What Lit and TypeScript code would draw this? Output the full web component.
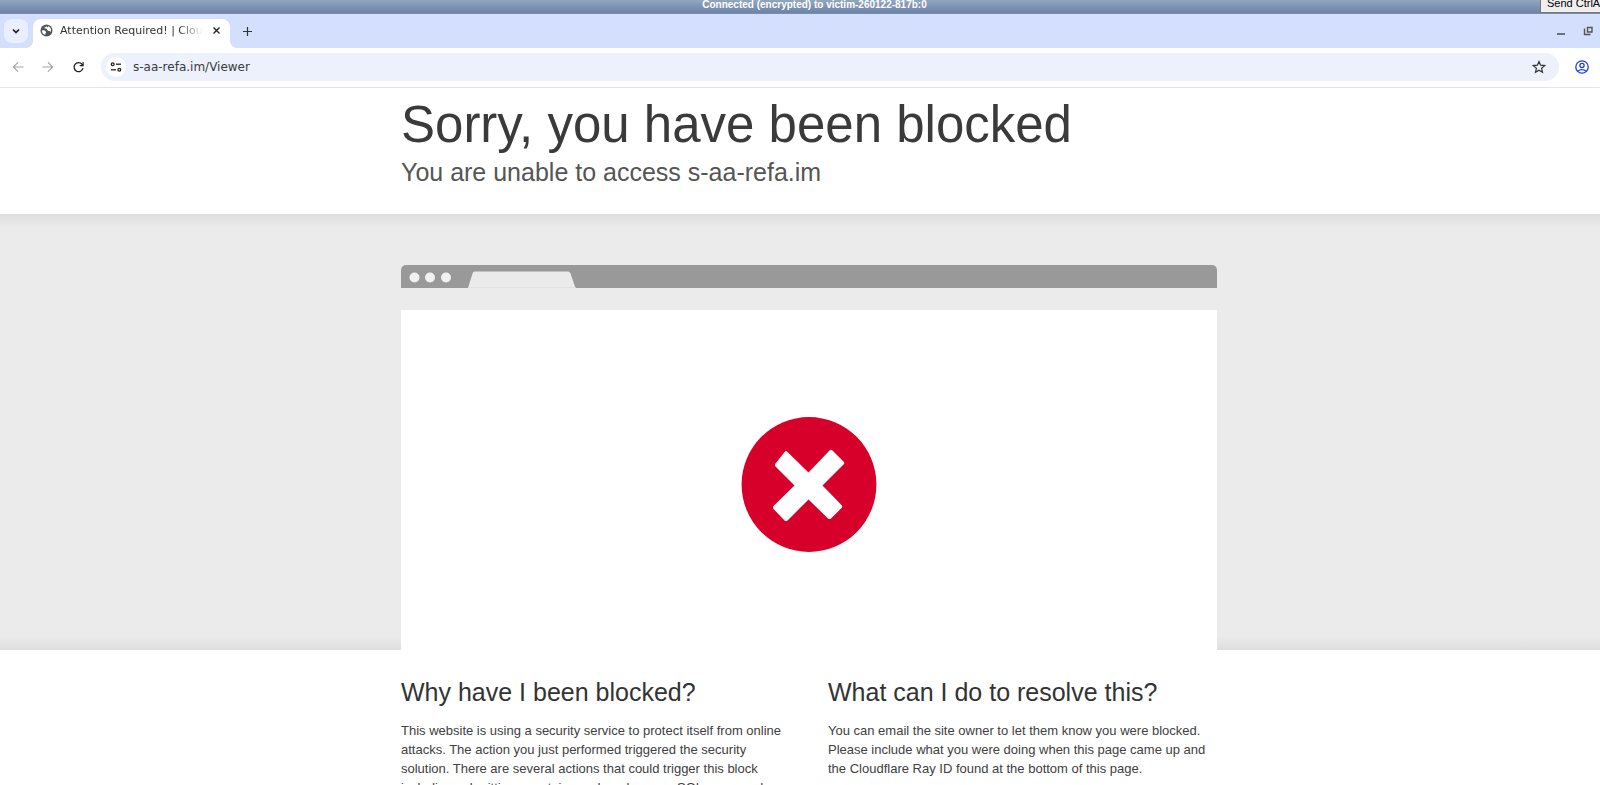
import { LitElement, html, css, svg } from "lit";
import { customElement, state } from "lit/decorators.js";

const icon = (w: number, h: number, body: unknown) =>
  html`<svg width=${w} height=${h} viewBox="0 0 ${w} ${h}" aria-hidden="true">${body}</svg>`;

@customElement("remote-bar")
class RemoteBar extends LitElement {
  static styles = css`
    :host {
      display: block;
      position: relative;
      height: 14px;
      overflow: hidden;
      background: linear-gradient(#92a6be, #6c82a9 92%, #8795b4);
      font-family: "Liberation Sans", Arial, sans-serif;
    }
    .status {
      height: 9px;
      line-height: 9px;
      padding-left: 29px;
      text-align: center;
      font-size: 10px;
      font-weight: bold;
      color: #fff;
      white-space: nowrap;
    }
    .send {
      position: absolute;
      top: -6px;
      left: calc(100% - 60px);
      width: 104px;
      height: 19px;
      padding: 0 0 0 6px;
      border: 1px solid #777;
      background: #efefef;
      color: #000;
      font: 11px "Liberation Sans", Arial, sans-serif;
      line-height: 17px;
      text-align: left;
      white-space: nowrap;
    }
  `;
  render() {
    return html`
      <div class="status">Connected (encrypted) to victim-260122-817b:0</div>
      <button class="send">Send CtrlAltDel</button>
    `;
  }
}

@customElement("browser-chrome")
class BrowserChrome extends LitElement {
  @state() url = "s-aa-refa.im/Viewer";

  static styles = css`
    :host {
      display: block;
      font-family: "DejaVu Sans", sans-serif;
      color: #1f1f1f;
    }
    button {
      display: flex;
      align-items: center;
      justify-content: center;
      flex: none;
      padding: 0;
      border: 0;
      background: none;
      color: inherit;
      font: inherit;
    }
    svg {
      display: block;
      flex: none;
    }
    .strip {
      display: flex;
      align-items: center;
      height: 34px;
      padding-left: 4px;
      background: #d3dffd;
    }
    .search {
      width: 24px;
      height: 24px;
      border-radius: 8px;
      background: #e9effe;
    }
    .tab {
      position: relative;
      display: flex;
      align-items: center;
      align-self: flex-end;
      width: 197px;
      height: 29px;
      margin-left: 5px;
      padding: 0 6px 6px 7px;
      box-sizing: border-box;
      border-radius: 8px 8px 0 0;
      background: #fff;
    }
    .tab::before,
    .tab::after {
      content: "";
      position: absolute;
      bottom: 0;
      width: 8px;
      height: 8px;
    }
    .tab::before {
      right: 100%;
      background: radial-gradient(circle at 0 0, transparent 8px, #fff 8px);
    }
    .tab::after {
      left: 100%;
      background: radial-gradient(circle at 100% 0, transparent 8px, #fff 8px);
    }
    .title {
      flex: 1;
      margin-left: 7px;
      overflow: hidden;
      white-space: nowrap;
      color: #333;
      font-size: 11px;
      line-height: 16px;
      mask-image: linear-gradient(90deg, #000 calc(100% - 24px), transparent);
    }
    .close {
      width: 16px;
      height: 16px;
      margin-left: 5px;
    }
    .plus {
      width: 24px;
      height: 24px;
      margin-left: 5px;
    }
    .window {
      display: flex;
      gap: 11px;
      margin-left: auto;
      padding-right: 4px;
    }
    .window button {
      width: 16px;
      height: 16px;
    }
    .toolbar {
      display: flex;
      align-items: center;
      height: 38px;
      padding: 0 9px 1px;
      background: #fff;
      border-bottom: 1px solid #e4e4e6;
    }
    .nav {
      display: flex;
      gap: 12px;
    }
    .nav button {
      width: 18px;
      height: 18px;
    }
    .off {
      color: #a3a4a6;
    }
    .omnibox {
      display: flex;
      align-items: center;
      flex: 1;
      height: 28px;
      margin: 0 14px;
      padding: 0 13px 0 5px;
      border-radius: 14px;
      background: #edf1fb;
    }
    .site {
      width: 20px;
      height: 20px;
      border-radius: 10px;
      background: #fff;
    }
    .url {
      flex: 1;
      min-width: 0;
      margin: 0 8px 0 7px;
      padding: 0;
      border: 0;
      outline: 0;
      background: none;
      color: #3a3b3e;
      font: 12px "DejaVu Sans", sans-serif;
    }
  `;

  render() {
    return html`
      <div class="strip">
        <button class="search" aria-label="Search tabs">
          ${icon(10, 10, svg`<path d="M2 3.500 5 6.500 8 3.500" fill="none" stroke="currentColor" stroke-width="1.700"/>`)}
        </button>
        <div class="tab">
          ${icon(13, 13, svg`<circle cx="6.500" cy="6.500" r="6" fill="#50555a"/>
            <path d="M2 6.500C4 5.700 5.600 6.500 6 8c.3 1-.8 1.300-.8 2.800C3 10.200 1.700 8.500 2 6.500Z" fill="#fff"/>
            <path d="M6 1.700c.1 1.300-.8 1.800-1.800 2 .5 1.400 2.200.7 2.800 1.500.7.900.5 2 2 1.900 1.300-.1 1 1 2 .5.500-2.600-.7-4.700-2.800-5.600.2 1-.5 1.500-1.200 1.200C6.600 3 6.700 2.200 6 1.700Z" fill="#fff"/>`)}
          <span class="title">Attention Required! | Cloudflare</span>
          <button class="close" aria-label="Close tab">
            ${icon(9, 9, svg`<path d="M1.500 1.500 7.500 7.500M7.500 1.500 1.500 7.500" stroke="currentColor" stroke-width="1.300"/>`)}
          </button>
        </div>
        <button class="plus" aria-label="New tab">
          ${icon(11, 11, svg`<path d="M5.500 1v9M1 5.500h9" stroke="#333" stroke-width="1.200"/>`)}
        </button>
        <div class="window">
          <button aria-label="Minimize">
            ${icon(16, 16, svg`<path d="M4 11h8" stroke="#555" stroke-width="1.600"/>`)}
          </button>
          <button aria-label="Restore">
            ${icon(16, 16, svg`<path d="M7.500 4.500h4.500v4.500h-4.500zM4.500 5.500v6h6" fill="none" stroke="#555" stroke-width="1.400"/>`)}
          </button>
        </div>
      </div>
      <div class="toolbar">
        <div class="nav">
          <button class="off" aria-label="Back">
            ${icon(12, 12, svg`<path d="M11.500 6H1.500M6 1.300 1.300 6 6 10.700" fill="none" stroke="currentColor" stroke-width="1.200"/>`)}
          </button>
          <button class="off" aria-label="Forward">
            ${icon(12, 12, svg`<path d="M.5 6h10M6 1.300 10.700 6 6 10.700" fill="none" stroke="currentColor" stroke-width="1.200"/>`)}
          </button>
          <button aria-label="Reload">
            ${icon(12, 12, svg`<path d="M11 7.200A4.500 4.500 0 1 1 10 3.200L11 4.400" fill="none" stroke="currentColor" stroke-width="1.300"/><path d="M11.700 1V5.200H7.700V4.100H10.600V1Z" fill="currentColor"/>`)}
          </button>
        </div>
        <div class="omnibox">
          <button class="site" aria-label="View site information">
            ${icon(12, 12, svg`<g fill="none" stroke="#222" stroke-width="1.300"><circle cx="2.700" cy="3.200" r="1.400"/><path d="M6 3.200h5"/><circle cx="9.300" cy="8.800" r="1.400"/><path d="M1 8.800h5"/></g>`)}
          </button>
          <input class="url" aria-label="Address" .value=${this.url} />
          <button aria-label="Bookmark this tab">
            ${icon(14, 14, svg`<path d="M7 1.500 8.600 5.200 12.700 5.600 9.600 8.300 10.500 12.300 7 10.200 3.500 12.300 4.400 8.300 1.300 5.600 5.400 5.200Z" fill="none" stroke="#333" stroke-width="1.200" stroke-linejoin="miter"/>`)}
          </button>
        </div>
        <button aria-label="Profile">
          ${icon(18, 18, svg`<g fill="none" stroke="#1f3fe0" stroke-width="1.300"><circle cx="9" cy="9" r="6.200"/><circle cx="9" cy="7.500" r="2.100"/><path d="M4.900 13.200C7 11 11 11 13.100 13.200"/></g>`)}
        </button>
      </div>
    `;
  }
}

@customElement("blocked-page")
class BlockedPage extends LitElement {
  static styles = css`
    :host {
      display: block;
      background: #fff;
      color: #404040;
      font-family: "Liberation Sans", Arial, sans-serif;
    }
    h1,
    h2,
    p {
      margin: 0;
      font-weight: normal;
    }
    .wrap {
      width: 816px;
      max-width: 100%;
      margin: 0 auto;
    }
    header {
      padding: 9px 0 25px;
    }
    h1 {
      font-size: 51px;
      line-height: 56px;
      color: #3a3a3a;
    }
    h2 {
      font-size: 25px;
      line-height: 34px;
      color: #333;
    }
    .sub {
      padding-top: 2px;
      color: #555;
    }
    .hero {
      padding-top: 51px;
      background: linear-gradient(#dedede, #ebebeb00 14px),
        linear-gradient(0deg, #dedede, #ebebeb00 14px), #ebebeb;
    }
    .bar {
      display: flex;
      align-items: flex-end;
      height: 23px;
      border-radius: 5px 5px 0 0;
      background: #999;
    }
    .bar svg {
      display: block;
    }
    .screen {
      display: grid;
      place-items: center;
      height: 340px;
      margin-top: 22px;
      background: #fff;
    }
    .screen svg {
      margin-top: 10px;
    }
    .columns {
      display: grid;
      grid-template-columns: 1fr 1fr;
      gap: 38px;
      padding: 25px 0;
    }
    p {
      margin-top: 12px;
      font-size: 13px;
      line-height: 19px;
    }
  `;
  render() {
    return html`
      <header>
        <div class="wrap">
          <h1>Sorry, you have been blocked</h1>
          <h2 class="sub">You are unable to access s-aa-refa.im</h2>
        </div>
      </header>
      <section class="hero">
        <div class="wrap">
          <div class="bar">
            ${icon(180, 23, svg`<g fill="#f1f1f1"><circle cx="13.500" cy="12.500" r="5"/><circle cx="29" cy="12.500" r="5"/><circle cx="45" cy="12.500" r="5"/></g>
              <path d="M67 23 71.500 8.500Q72 6.500 74 6.500H167Q169 6.500 169.500 8.500L174.500 23Z" fill="#ebebeb"/><path d="M67 22.500H174.500" stroke="#e2e2e2"/>`)}
          </div>
          <div class="screen">
            ${icon(136, 136, svg`<circle cx="68" cy="67.500" r="67.400" fill="#d7002a"/>
              <path d="M46 34.500 67.500 55.500 88.500 33.500Q90 32 91.500 33.500L102.500 44.500Q104 46 102.500 47.500L81.500 68.500 100.500 88Q102 89.500 100.500 91L90 101.500Q88.500 102.500 87 101.500L67.500 82.500 46.500 103.500Q45 104.500 43.500 103.500L32.500 92Q31.500 90.500 32.500 89L53.500 68.500 34.500 49.500Q33.500 48 34.500 46.500L44 34.500Q45 33.500 46 34.500Z" fill="#fff"/>`)}
          </div>
        </div>
      </section>
      <section class="wrap columns">
        <div>
          <h2>Why have I been blocked?</h2>
          <p>
            This website is using a security service to protect itself from online attacks. The
            action you just performed triggered the security solution. There are several actions
            that could trigger this block including submitting a certain word or phrase, a SQL
            command or malformed data.
          </p>
        </div>
        <div>
          <h2>What can I do to resolve this?</h2>
          <p>
            You can email the site owner to let them know you were blocked. Please include what you
            were doing when this page came up and the Cloudflare Ray ID found at the bottom of this
            page.
          </p>
        </div>
      </section>
    `;
  }
}

@customElement("app-root")
class AppRoot extends LitElement {
  static styles = css`
    :host {
      display: block;
      height: 100vh;
      overflow: hidden;
      background: #fff;
    }
    /* The remote desktop is slightly wider than the viewer window. */
    .desktop {
      width: calc(100% + 18px);
    }
  `;
  render() {
    return html`
      <remote-bar></remote-bar>
      <browser-chrome></browser-chrome>
      <div class="desktop"><blocked-page></blocked-page></div>
    `;
  }
}
